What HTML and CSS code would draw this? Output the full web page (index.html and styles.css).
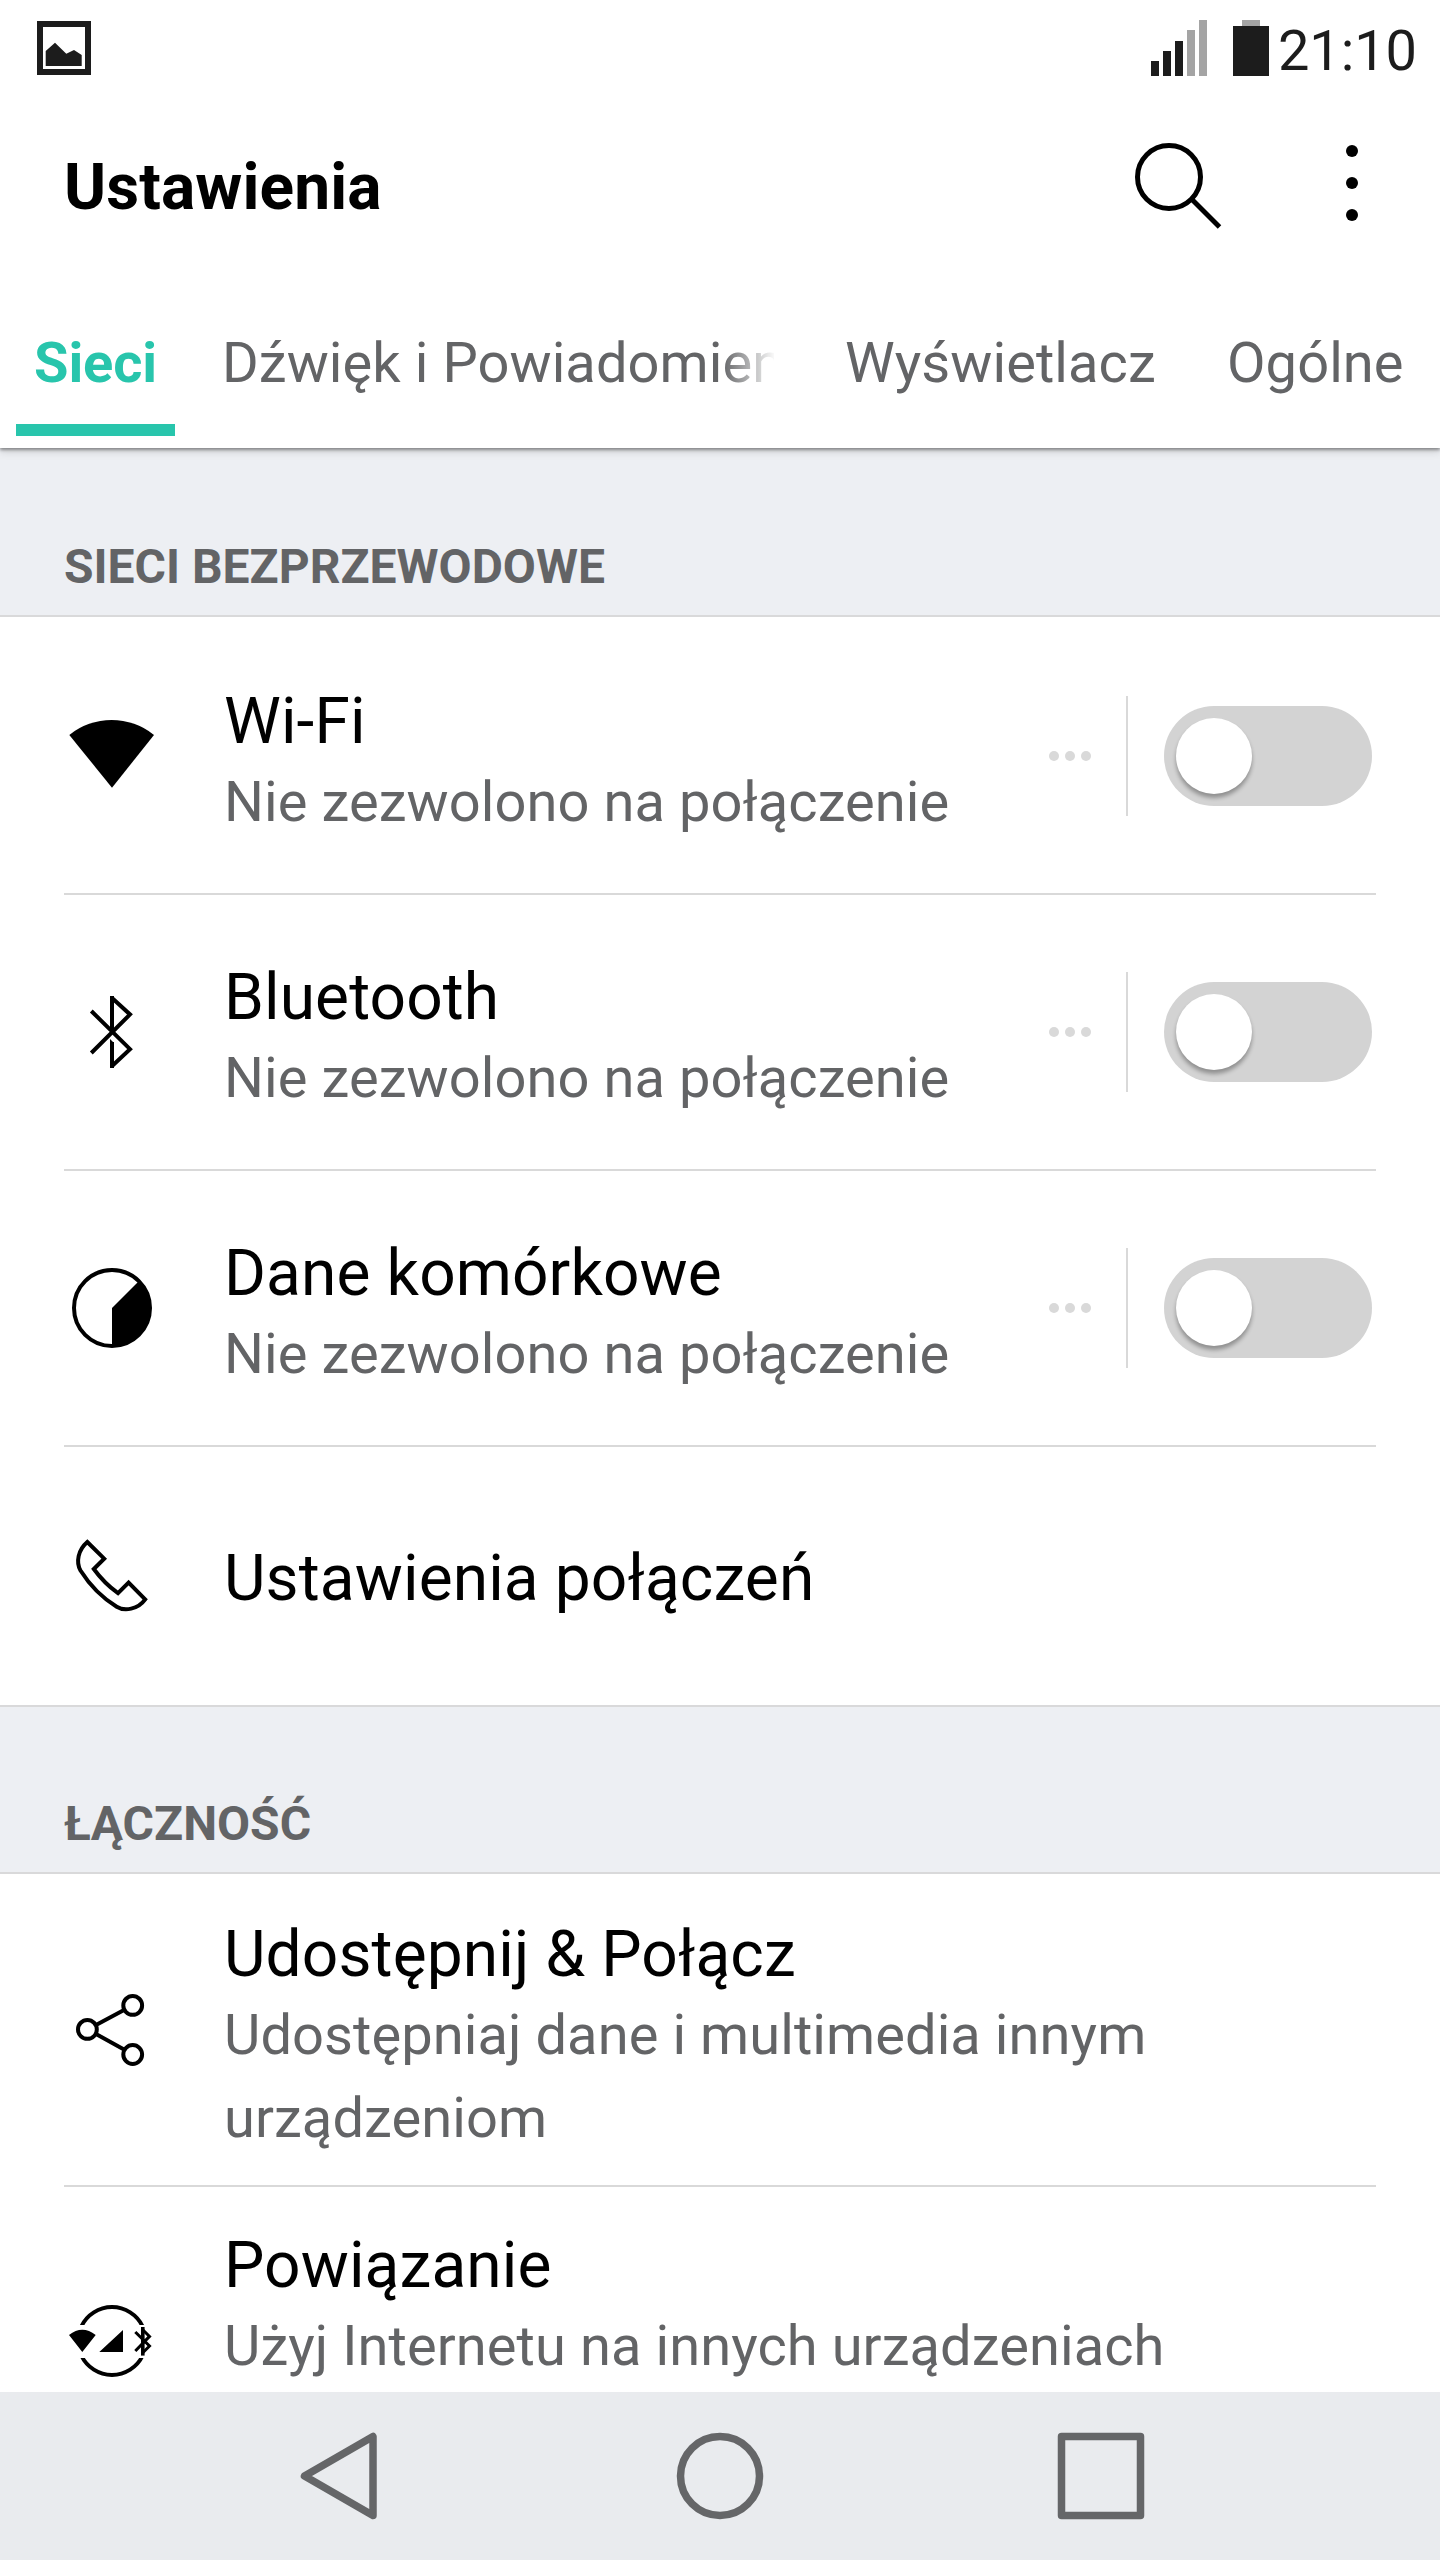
FILE: index.html
```html
<!DOCTYPE html>
<html lang="pl">
<head>
<meta charset="utf-8">
<title>Ustawienia</title>
<link rel="stylesheet" href="styles.css">
</head>
<body>
<div class="screen">
  <header class="top">
    <div class="status">
      <svg class="status-picture" viewBox="0 0 54 54"><path fill="none" stroke="#1c1c1c" stroke-width="6" d="M3 3H51V51H3Z"/><path fill="#1c1c1c" d="M8.7 30 18 21.8 29.3 32.7 37 29 44.7 34V45H8.7Z"/></svg>
      <div class="status-right">
        <svg class="signal" viewBox="0 0 56 56"><path fill="#1c1c1c" d="M0 41H8V56H0ZM12 31H20V56H12ZM24 21H32V56H24Z"/><path fill="#a4a4a4" d="M36 10H44V56H36ZM48 0H56V56H48Z"/></svg>
        <svg class="battery" viewBox="0 0 36 56"><path fill="#a4a4a4" d="M9 0H27V6H9Z"/><path fill="#1c1c1c" d="M0 6H36V56H0Z"/></svg>
        <span class="clock">21:10</span>
      </div>
    </div>
    <div class="bar">
      <h1 class="title">Ustawienia</h1>
      <div class="actions">
        <svg class="search" viewBox="0 0 90 90"><circle cx="36" cy="36" r="31.5" fill="none" stroke="#000" stroke-width="5"/><path d="M59 58.5 86.5 86" stroke="#000" stroke-width="5" fill="none"/></svg>
        <svg class="more" viewBox="0 0 12 90"><circle cx="6" cy="10" r="6"/><circle cx="6" cy="42" r="6"/><circle cx="6" cy="74" r="6"/></svg>
      </div>
    </div>
    <nav class="tabs">
      <div class="tab tab-active">Sieci</div>
      <div class="tab tab-sound">Dźwięk i Powiadomienia</div>
      <div class="tab tab-display">Wyświetlacz</div>
      <div class="tab">Ogólne</div>
    </nav>
  </header>

  <main class="content">
    <h2 class="section">SIECI BEZPRZEWODOWE</h2>
    <div class="list">
      <div class="row">
        <svg class="icon" viewBox="0 0 96 96"><path d="M5.3 27A67.3 67.3 0 0 1 90 27L48 79.7Z"/></svg>
        <div class="text"><div class="name">Wi-Fi</div><div class="desc">Nie zezwolono na połączenie</div></div>
        <div class="control"><span class="dots"><i></i><i></i><i></i></span><span class="rule"></span><span class="toggle"><span class="knob"></span></span></div>
      </div>
      <div class="row">
        <svg class="icon" viewBox="0 0 96 96" fill="none" stroke="#000" stroke-width="4"><path d="M27.3 27 66 65.2 48.6 81.5M27.3 69 66 30.4 48.6 14.5M48 12V46M48 84V58"/><path stroke="none" fill="#000" d="M46 55 50 59V62H46Z"/></svg>
        <div class="text"><div class="name">Bluetooth</div><div class="desc">Nie zezwolono na połączenie</div></div>
        <div class="control"><span class="dots"><i></i><i></i><i></i></span><span class="rule"></span><span class="toggle"><span class="knob"></span></span></div>
      </div>
      <div class="row">
        <svg class="icon" viewBox="0 0 96 96"><circle cx="48" cy="48" r="38" fill="none" stroke="#000" stroke-width="4"/><path d="M48 48 75.5 20.5A39 39 0 0 1 48 87Z"/></svg>
        <div class="text"><div class="name">Dane komórkowe</div><div class="desc">Nie zezwolono na połączenie</div></div>
        <div class="control"><span class="dots"><i></i><i></i><i></i></span><span class="rule"></span><span class="toggle"><span class="knob"></span></span></div>
      </div>
      <div class="row row-single">
        <svg class="icon" viewBox="0 0 96 96" fill="none" stroke="#000" stroke-width="4"><path d="M23.3 14 40.2 30.7 29.8 41Q40 55 54 65.2L64.6 54.6 81.2 71.4C74 81.5 60.5 83.5 52.7 78.7Q31 65.5 16.5 42.5C11.8 34 14 22 23.3 14Z"/></svg>
        <div class="text"><div class="name">Ustawienia połączeń</div></div>
      </div>
    </div>

    <h2 class="section section-bordered">ŁĄCZNOŚĆ</h2>
    <div class="list">
      <div class="row row-tall">
        <svg class="icon" viewBox="0 0 96 96" fill="none" stroke="#000" stroke-width="4"><circle cx="23.4" cy="47.4" r="9.4"/><circle cx="68.7" cy="23.4" r="9.4"/><circle cx="68.7" cy="72.5" r="9.4"/><path d="M32 43 60 28M32 52 60 67.5"/></svg>
        <div class="text"><div class="name">Udostępnij &amp; Połącz</div><div class="desc">Udostępniaj dane i multimedia innym urządzeniom</div></div>
      </div>
      <div class="row row-tall">
        <svg class="icon" viewBox="0 0 96 96"><path fill="none" stroke="#000" stroke-width="4" d="M17.3 33.5A34 34 0 0 1 78.7 33.5M17.3 62.5A34 34 0 0 0 78.7 62.5"/><path fill="#fff" d="M8 32H88V65H8Z"/><path d="M5 42Q18.3 31.5 31.7 42L18.3 59ZM35.3 59 59 37V59Z"/><path fill="none" stroke="#000" stroke-width="3" d="M71.3 39 85.5 53 79 59.5M71.3 58 85.5 43.4 79 37"/><path stroke="#000" stroke-width="3.6" d="M78.8 34V62.6"/></svg>
        <div class="text"><div class="name">Powiązanie</div><div class="desc">Użyj Internetu na innych urządzeniach</div></div>
      </div>
    </div>
  </main>

  <footer class="navbar">
    <svg class="nav-icon" viewBox="0 0 92 92"><path d="M11.5 46 80 6.5V85.5Z"/></svg>
    <svg class="nav-icon" viewBox="0 0 92 92"><circle cx="46" cy="46" r="39.5"/></svg>
    <svg class="nav-icon" viewBox="0 0 92 92"><path d="M6.5 6.5H85.5V85.5H6.5Z"/></svg>
  </footer>
</div>
</body>
</html>
```
FILE: styles.css
```css
* { box-sizing: border-box; }

body {
  margin: 0;
  font-family: Roboto, "Noto Sans", sans-serif;
  background: #fff;
}

svg { display: block; flex: none; }

.screen {
  display: flex;
  flex-direction: column;
  width: 1440px;
  height: 2560px;
  overflow: hidden;
  background: #fff;
}

.top {
  position: relative;
  z-index: 1;
  flex: none;
  height: 448px;
  background: #fff;
  box-shadow: 0 2px 3px rgba(0, 0, 0, 0.38), 0 4px 8px rgba(0, 0, 0, 0.12);
}

.status {
  display: flex;
  justify-content: space-between;
  height: 96px;
  padding: 20px 26px 0 37px;
  color: #1c1c1c;
}
.status-picture { width: 54px; height: 54px; margin-top: 1px; }
.status-right { display: flex; }
.signal { width: 56px; height: 56px; }
.battery { width: 36px; height: 56px; margin-left: 26px; }
.clock {
  width: 136px;
  margin: -2px 0 0 9px;
  font-size: 56px;
  line-height: 66px;
  letter-spacing: -0.1px;
  white-space: nowrap;
}

.bar {
  display: flex;
  justify-content: space-between;
  height: 200px;
  padding: 45px 82px 0 64px;
}
.title {
  margin: 9px 0 0;
  font-size: 64px;
  line-height: 75px;
  font-weight: 700;
  letter-spacing: 0.1px;
}
.actions { display: flex; gap: 123px; }
.search { width: 90px; height: 90px; }
.more { width: 12px; height: 90px; }

.tabs {
  display: flex;
  height: 140px;
  padding: 0 0 0 16px;
  font-size: 56px;
  line-height: 66px;
  letter-spacing: 0.08px;
  color: #636466;
}
.tab { padding-top: 34px; white-space: nowrap; }
.tab-active {
  width: 159px;
  padding-left: 18px;
  border-bottom: 12px solid #28c5ac;
  font-weight: 700;
  letter-spacing: -0.1px;
  color: #28c5ac;
}
.tab-sound {
  width: 552px;
  margin: 0 71px 0 47px;
  overflow: hidden;
  -webkit-mask-image: linear-gradient(to right, #000 500px, transparent 554px);
  mask-image: linear-gradient(to right, #000 500px, transparent 554px);
}
.tab-display { width: 382px; }

.content { flex: 1; min-height: 0; overflow: hidden; }

.section {
  height: 169px;
  margin: 0;
  padding: 91px 64px 0;
  border-bottom: 2px solid #d9d9da;
  background: #edeff3;
  font-size: 48px;
  line-height: 56px;
  font-weight: 700;
  color: #636466;
}
.section-bordered { padding-top: 89px; border-top: 2px solid #d9d9da; }

.list { padding: 2px 64px 0; }

.row {
  display: flex;
  align-items: center;
  height: 276px;
  border-bottom: 2px solid #d9d9d9;
}
.row-single { height: 258px; border-bottom: 0; }
.row-tall { height: 311px; }

.icon { width: 96px; height: 96px; }
.row-tall .icon { margin-bottom: 1px; }
.text { flex: 1; margin: 16px 0 0 64px; }
.row-single .text { margin-top: 5px; }
.row-tall .text { align-self: flex-start; width: 1060px; margin-top: 41px; flex: none; }
.name { font-size: 64px; line-height: 75px; letter-spacing: 0.12px; color: #000; }
.desc { margin-top: 2px; font-size: 56px; line-height: 83px; letter-spacing: 0.08px; color: #636466; }

.control { display: flex; align-items: center; margin-right: 4px; }
.dots { display: flex; gap: 6px; }
.dots i { width: 10px; height: 10px; border-radius: 50%; background: #d9d9d9; }
.rule { width: 2px; height: 120px; margin: 0 36px 0 35px; background: #d9d9d9; }
.toggle {
  width: 208px;
  height: 100px;
  padding: 12px;
  border-radius: 50px;
  background: #d3d3d3;
}
.knob {
  display: block;
  width: 76px;
  height: 76px;
  border-radius: 50%;
  background: #fff;
  box-shadow: 0 4px 4px rgba(0, 0, 0, 0.32);
}

.navbar {
  display: flex;
  flex: none;
  justify-content: center;
  gap: 289px;
  height: 168px;
  padding-top: 38px;
  background: #e9ebee;
}
.nav-icon {
  width: 92px;
  height: 92px;
  fill: none;
  stroke: #656668;
  stroke-width: 7.5px;
  stroke-linejoin: round;
}
```
